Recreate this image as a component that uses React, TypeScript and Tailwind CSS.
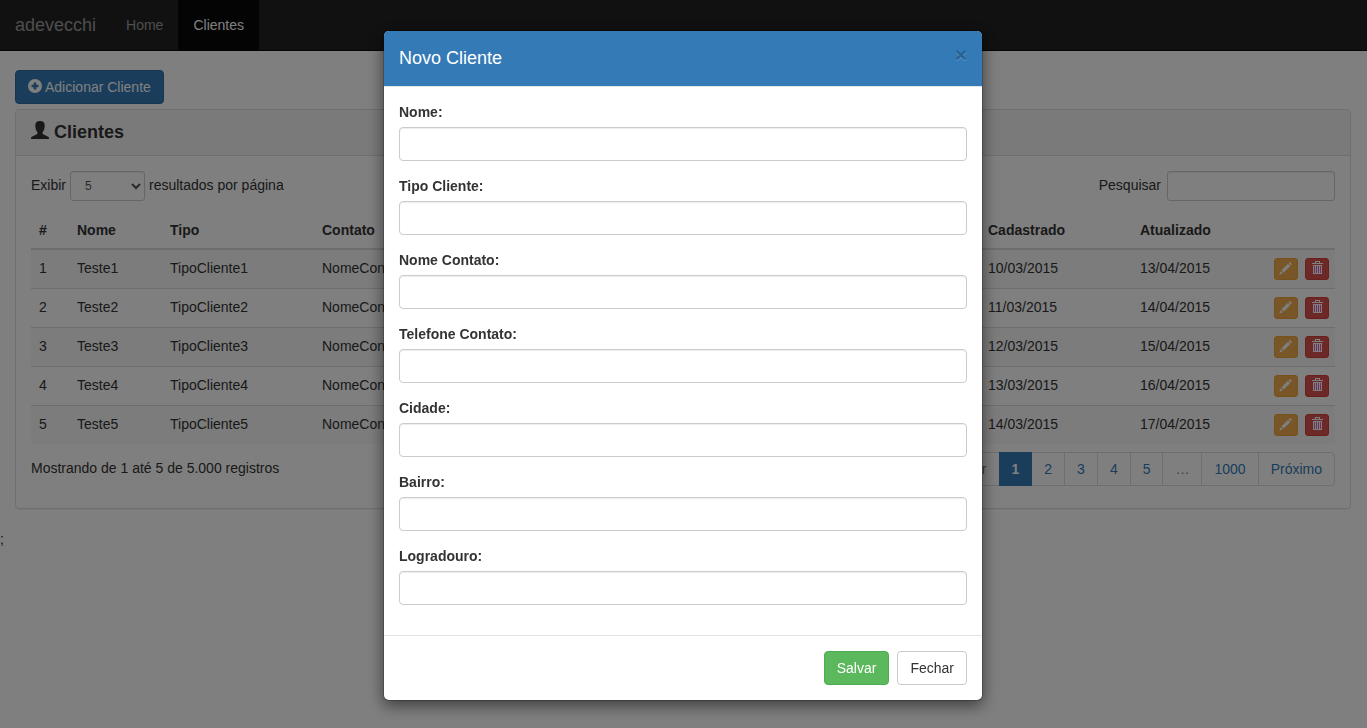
import type { ReactNode } from "react";

const rows = [1, 2, 3, 4, 5].map((n) => ({
  id: n,
  nome: `Teste${n}`,
  tipo: `TipoCliente${n}`,
  contato: `NomeContato${n}`,
  cadastrado: `${9 + n}/03/2015`,
  atualizado: `${12 + n}/04/2015`,
}));

const fields = [
  { id: "nome", label: "Nome:" },
  { id: "tipo", label: "Tipo Cliente:" },
  { id: "contato", label: "Nome Contato:" },
  { id: "telefone", label: "Telefone Contato:" },
  { id: "cidade", label: "Cidade:" },
  { id: "bairro", label: "Bairro:" },
  { id: "logradouro", label: "Logradouro:" },
];

function PlusSign() {
  return (
    <svg className="mb-[2px] size-[14px]" viewBox="0 0 14 14" fill="currentColor" aria-hidden="true">
      <path fillRule="evenodd" d="M7 0a7 7 0 1 1 0 14A7 7 0 0 1 7 0ZM5.700 3.500v2.200H3.500v2.600h2.200v2.200h2.600V8.300h2.200V5.700H8.300V3.500Z" />
    </svg>
  );
}

function UserIcon() {
  return (
    <svg className="mb-[5px] size-[18px]" viewBox="0 0 18 18" fill="currentColor" aria-hidden="true">
      <path d="M9 0c2.900 0 4.700 1.200 4.700 4 0 1.500-.1 2.900-.5 4.300-.3 1.200-.9 2.200-1.700 3v1c0 .5.300.8.700 1l4.400 2.100c.9.400 1.400 1 1.400 1.700V18H0v-.9c0-.7.500-1.300 1.400-1.700l4.400-2.100c.4-.2.700-.5.700-1v-1c-.8-.8-1.400-1.800-1.700-3C4.400 6.900 4.300 5.500 4.300 4 4.300 1.200 6.100 0 9 0Z" />
    </svg>
  );
}

function PencilIcon() {
  return (
    <svg className="h-[13px] w-[14px]" viewBox="0 0 14 13" fill="currentColor" aria-hidden="true">
      <path d="M10.500.3q.4-.4.8 0l1.400 1.400q.4.400 0 .8l-.8.8-2.200-2.200ZM9.100 1.700l2.200 2.200-6.600 6.600-2.200-2.200ZM1.700 9.100l2.200 2.200L.3 12.700Z" />
    </svg>
  );
}

function TrashIcon() {
  return (
    <svg className="h-[13px] w-[11px]" viewBox="0 0 11 13" fill="currentColor" aria-hidden="true">
      <path d="M3 0h5v2h3v1H0V2h3Zm1 1v1h3V1Z" fillRule="evenodd" />
      <path d="M1 4h9v9H1Z" />
      <path d="M2 5h1v7H2ZM4 5h1v7H4ZM6 5h1v7H6ZM8 5h1v7H8Z" className="fill-[#e060b8]" />
    </svg>
  );
}

function PageLink({ children, className = "" }: { children: ReactNode; className?: string }) {
  return (
    <li className="-ml-px">
      <a href="#" className={`block border px-3 py-[6px] leading-5 ${className || "border-[#ddd] text-[#337ab7]"}`}>
        {children}
      </a>
    </li>
  );
}

function Navbar() {
  return (
    <nav className="flex h-[51px] border-b border-[#080808] bg-[#222] leading-5">
      <a href="#" className="p-[15px] text-[18px] text-[#9d9d9d]">adevecchi</a>
      <a href="#" className="p-[15px] text-[#9d9d9d]">Home</a>
      <a href="#" className="bg-[#080808] p-[15px] text-white">Clientes</a>
    </nav>
  );
}

function ClientTable() {
  return (
    <table className="mt-[11px] w-full table-fixed border-collapse text-left">
      <colgroup>
        <col className="w-[38px]" />
        <col className="w-[93px]" />
        <col className="w-[152px]" />
        <col />
        <col className="w-[152px]" />
        <col className="w-[134px]" />
        <col className="w-[69px]" />
      </colgroup>
      <thead>
        <tr className="[&>th]:p-2">
          <th>#</th>
          <th>Nome</th>
          <th>Tipo</th>
          <th>Contato</th>
          <th>Cadastrado</th>
          <th>Atualizado</th>
          <td></td>
        </tr>
      </thead>
      <tbody className="border-t-2 border-[#ddd]">
        {rows.map((r) => (
          <tr key={r.id} className="border-t border-[#ddd] align-top first:border-t-0 odd:bg-[#f9f9f9] [&>td]:py-2 [&>td]:pl-2">
            <td>{r.id}</td>
            <td>{r.nome}</td>
            <td>{r.tipo}</td>
            <td>{r.contato}</td>
            <td>{r.cadastrado}</td>
            <td>{r.atualizado}</td>
            <td>
              <div className="flex gap-[7px]">
                <button aria-label="Editar" className="flex h-[22px] w-6 items-start justify-center rounded-[3px] border border-[#eea236] bg-[#f0ad4e] pt-[3px] text-white">
                  <PencilIcon />
                </button>
                <button aria-label="Excluir" className="flex h-[22px] w-6 items-start justify-center rounded-[3px] border border-[#d43f3a] bg-[#d9534f] pt-[2px] text-white">
                  <TrashIcon />
                </button>
              </div>
            </td>
          </tr>
        ))}
      </tbody>
    </table>
  );
}

function ClientModal() {
  return (
    <div className="fixed inset-0 flex items-start justify-center overflow-hidden bg-black/50 pt-[30px] pr-px">
      <div
        role="dialog"
        aria-modal="true"
        aria-labelledby="modal-title"
        className="w-[600px] rounded-md border border-black/20 bg-white bg-clip-padding shadow-[0_5px_15px_rgba(0,0,0,0.5)]"
      >
        <header className="flex items-start justify-between rounded-t-[5px] border-b border-[#e5e5e5] bg-[#337ab7] p-[15px]">
          <h4 id="modal-title" className="text-[18px] leading-[25px] text-white">Novo Cliente</h4>
          <button aria-label="Fechar janela" className="-mt-[2px] text-[21px] leading-[21px] font-bold text-black opacity-20 [text-shadow:0_1px_0_#fff]">
            ×
          </button>
        </header>
        <form className="flex flex-col gap-[15px] px-[15px] pt-[15px] pb-[30px]">
          {fields.map((f) => (
            <div key={f.id}>
              <label htmlFor={f.id} className="mb-[5px] block font-bold">{f.label}</label>
              <input
                id={f.id}
                type="text"
                className="block h-[34px] w-full rounded border border-[#ccc] bg-white px-3 shadow-[inset_0_1px_1px_rgba(0,0,0,0.075)]"
              />
            </div>
          ))}
        </form>
        <footer className="flex justify-end gap-2 border-t border-[#e5e5e5] p-[15px]">
          <button className="rounded border border-[#4cae4c] bg-[#5cb85c] px-3 py-[6px] text-white">Salvar</button>
          <button className="rounded border border-[#ccc] bg-white px-3 py-[6px]">Fechar</button>
        </footer>
      </div>
    </div>
  );
}

export default function App() {
  return (
    <div className="min-h-screen bg-white font-['Liberation_Sans',Arial,sans-serif] text-[14px] leading-5 text-[#333]">
      <Navbar />
      <main className="pt-[19px] pr-4 pl-[15px]">
        <button className="flex items-center gap-[3px] rounded border border-[#2e6da4] bg-[#337ab7] px-3 py-[6px] text-white">
          <PlusSign />
          Adicionar Cliente
        </button>
        <section className="mt-[5px] mb-5 rounded border border-[#ddd] shadow-[0_1px_1px_rgba(0,0,0,0.05)]">
          <h3 className="flex items-center gap-[5px] rounded-t-[3px] border-b border-[#ddd] bg-[#f5f5f5] px-[15px] py-[10px] text-[18px] leading-[25px] font-bold">
            <UserIcon />
            Clientes
          </h3>
          <div className="px-[15px] pt-[15px] pb-[22px]">
            <div className="flex justify-between">
              <label className="flex items-start gap-1 leading-7">
                Exibir
                <select className="h-[30px] w-[75px] rounded-[3px] border border-[#ccc] bg-white px-[10px] text-[12px] text-[#555] shadow-[inset_0_1px_1px_rgba(0,0,0,0.075)]">
                  <option>5</option>
                </select>
                resultados por página
              </label>
              <label className="flex items-start gap-[6px] leading-7">
                Pesquisar
                <input
                  type="search"
                  className="h-[30px] w-[168px] rounded-[3px] border border-[#ccc] bg-white px-[10px] text-[12px] shadow-[inset_0_1px_1px_rgba(0,0,0,0.075)]"
                />
              </label>
            </div>
            <ClientTable />
            <div className="flex justify-between pt-2">
              <p className="pt-[6px]">Mostrando de 1 até 5 de 5.000 registros</p>
              <ul className="flex">
                <PageLink className="rounded-l border-[#ddd] text-[#777]">Anterior</PageLink>
                <PageLink className="relative border-[#337ab7] bg-[#337ab7] font-bold text-white">1</PageLink>
                <PageLink>2</PageLink>
                <PageLink>3</PageLink>
                <PageLink>4</PageLink>
                <PageLink>5</PageLink>
                <PageLink className="border-[#ddd] text-[#777]">…</PageLink>
                <PageLink>1000</PageLink>
                <PageLink className="rounded-r border-[#ddd] text-[#337ab7]">Próximo</PageLink>
              </ul>
            </div>
          </div>
        </section>
      </main>
      <p>;</p>
      <ClientModal />
    </div>
  );
}
